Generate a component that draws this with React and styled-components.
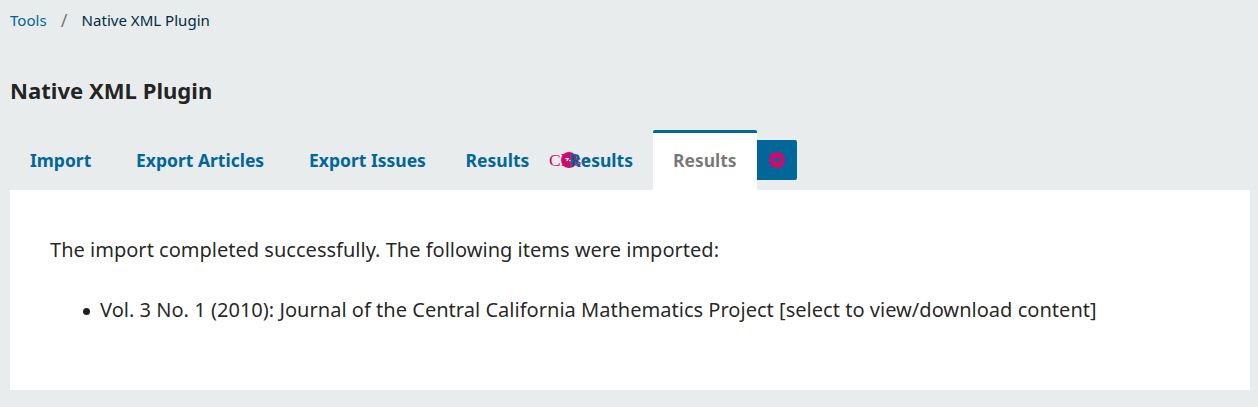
import React from "react";
import styled, { createGlobalStyle } from "styled-components";

const GlobalStyle = createGlobalStyle`
  * { box-sizing: border-box; }
  body { margin: 0; background: #e8eced; font-family: "Noto Sans", sans-serif; color: rgba(0,0,0,.87); }
`;

const Page = styled.div`
  padding: 0 8px 17px 10px;
  height: 407px;
  overflow: hidden;
`;

const Breadcrumbs = styled.nav`
  display: flex;
  height: 40px;
  font-size: 15.06px;
  line-height: 40px;
`;

const Crumb = styled.a`
  color: ${(p) => (p.$current ? "#002c40" : "#006798")};
`;

const Separator = styled.span`
  width: 35px;
  text-align: center;
  font-size: 18px;
  color: rgba(0,0,0,.54);
`;

const Title = styled.h1`
  margin: 35px 0 24px;
  font-size: 22.1px;
  line-height: 31px;
  font-weight: 700;
`;

const TabList = styled.ul`
  display: flex;
  align-items: flex-start;
  list-style: none;
  margin: 0;
  padding: 0;
  height: 60px;
`;

const Tab = styled.li`
  position: relative;
  display: flex;
  flex: none;
  width: ${(p) => p.$width}px;
  height: 60px;
  padding-left: 20px;
  border-top: 3px solid ${(p) => (p.$active ? "#006798" : "transparent")};
  border-radius: 2px 2px 0 0;
  background: ${(p) => (p.$active ? "#fff" : "transparent")};
  color: ${(p) => (p.$active ? "rgba(0,0,0,.54)" : "#006798")};
  font-size: 17.5px;
  line-height: 55px;
  font-weight: 700;
  white-space: nowrap;
`;

const CloseOverlay = styled.span`
  position: absolute;
  left: 103.5px;
  top: 17px;
  height: 20px;
  font: 17.5px/20px "Liberation Serif", serif;
  color: #d00a6c;
`;

const CloseButton = styled.button`
  display: flex;
  align-items: center;
  justify-content: center;
  width: 40px;
  height: 40px;
  margin: 10px 0 0;
  padding: 0 0 0 1px;
  border: 0;
  border-radius: 0 2px 2px 0;
  background: #006798;
`;

const OverlayBadge = styled.span`
  position: absolute;
  left: 12px;
  top: 2px;
  display: flex;
`;

const Panel = styled.main`
  height: 200px;
  padding: 40px;
  background: #fff;
  font-size: 20.07px;
  line-height: 40px;
`;

const Message = styled.p`
  margin: 0 0 20px;
  font-size: 20.05px;
  white-space: nowrap;
`;

const Items = styled.ul`
  margin: 0;
  padding-left: 50px;
  list-style: none;
  white-space: nowrap;
`;

const Item = styled.li`
  position: relative;
  &::before {
    content: "";
    position: absolute;
    left: -17px;
    top: 17.5px;
    width: 7px;
    height: 7px;
    border-radius: 50%;
    background: currentColor;
  }
`;

function Badge() {
  return (
    <svg width="16" height="16" viewBox="0 0 16 16">
      <circle cx="8" cy="8" r="8" fill="#d00a6c" />
      <rect x="3.5" y="6.6" width="9" height="2.7" rx=".4" fill="#006798" />
    </svg>
  );
}

function OverlappedBadge() {
  return (
    <svg width="16" height="16" viewBox="0 0 16 16">
      <circle cx="8" cy="8" r="8" fill="#d00a6c" />
      <path d="M4.5 6.7h2.8L5.8 8.8M8.2 8.6h1.6" fill="none" stroke="#e8eced" strokeWidth="1.2" />
    </svg>
  );
}

const TabLabel = styled.span`
  position: relative;
  z-index: 1;
`;

export default function App() {
  return (
    <>
      <GlobalStyle />
      <Page>
        <Breadcrumbs>
          <Crumb>Tools</Crumb>
          <Separator>/</Separator>
          <Crumb $current>Native XML Plugin</Crumb>
        </Breadcrumbs>
        <Title>Native XML Plugin</Title>
        <TabList>
          <Tab $width={106}>Import</Tab>
          <Tab $width={173}>Export Articles</Tab>
          <Tab $width={156.6}>Export Issues</Tab>
          <Tab $width={103.7}>
            Results
            <CloseOverlay>Close<OverlayBadge><OverlappedBadge /></OverlayBadge></CloseOverlay>
          </Tab>
          <Tab $width={103.7}><TabLabel>Results</TabLabel></Tab>
          <Tab $width={104} $active>Results</Tab>
          <CloseButton aria-label="Close"><Badge /></CloseButton>
        </TabList>
        <Panel>
          <Message>The import completed successfully. The following items were imported:</Message>
          <Items>
            <Item>Vol. 3 No. 1 (2010): Journal of the Central California Mathematics Project [select to view/download content]</Item>
          </Items>
        </Panel>
      </Page>
    </>
  );
}
